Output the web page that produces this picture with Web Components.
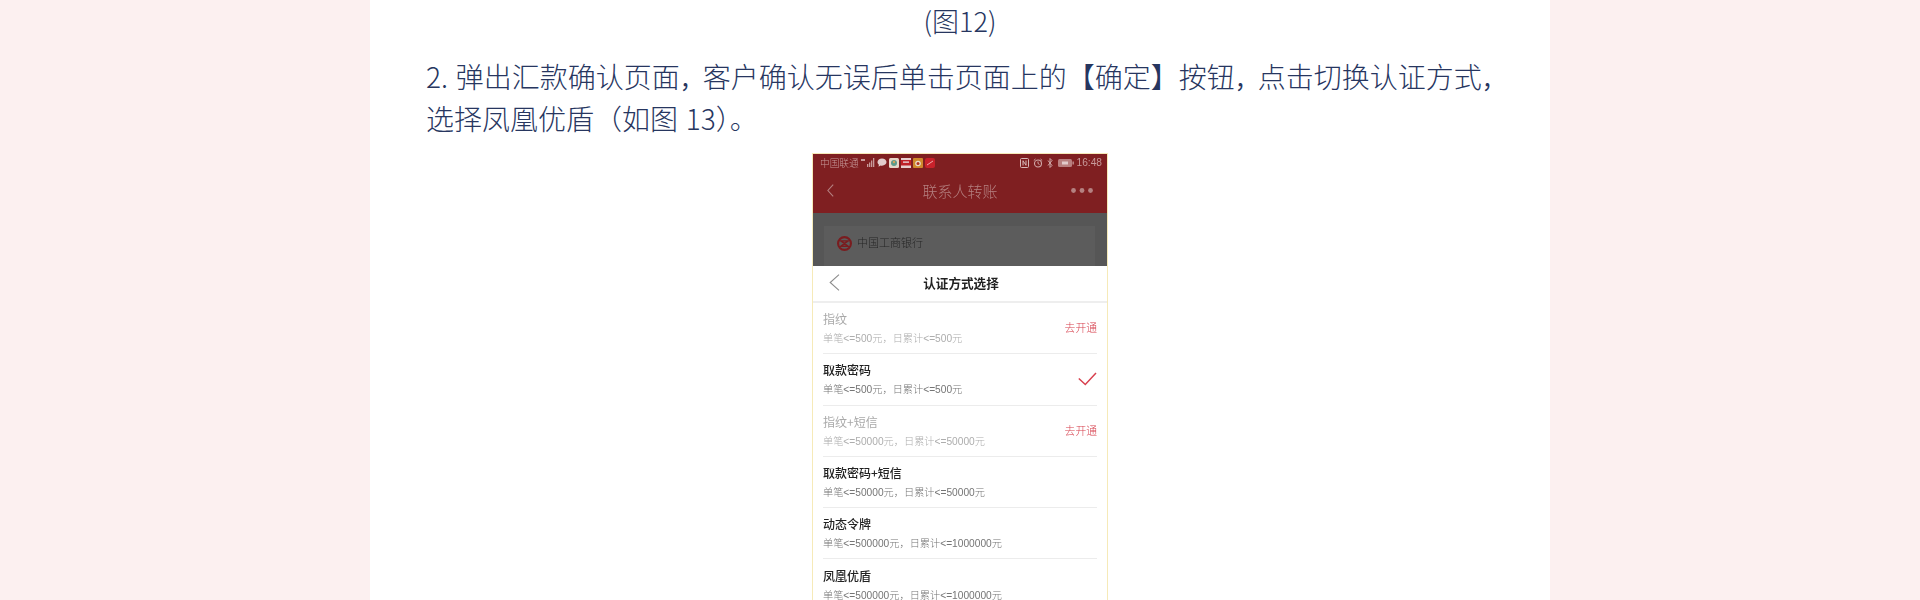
<!DOCTYPE html>
<html lang="zh-CN"><head><meta charset="utf-8"><title>图12</title>
<style>
html,body{margin:0;height:600px;overflow:hidden;background:#fcf0f0}
body{font-family:"Noto Sans CJK SC","Noto Sans",sans-serif}
</style></head><body>
<doc-page>
  <doc-caption>(图12)</doc-caption>
  <doc-para>2. 弹出汇款确认页面<doc-comma>，</doc-comma>客户确认无误后单击页面上的【确定】按钮<doc-comma>，</doc-comma>点击切换认证方式<doc-comma>，</doc-comma>选择凤凰优盾（如图 13）。</doc-para>
  <phone-shot>
    <method-row slot="rows" state="off" title-text="指纹" sub="单笔&lt;=500元，日累计&lt;=500元"></method-row>
    <method-row slot="rows" state="checked" title-text="取款密码" sub="单笔&lt;=500元，日累计&lt;=500元"></method-row>
    <method-row slot="rows" state="off" title-text="指纹+短信" sub="单笔&lt;=50000元，日累计&lt;=50000元"></method-row>
    <method-row slot="rows" title-text="取款密码+短信" sub="单笔&lt;=50000元，日累计&lt;=50000元"></method-row>
    <method-row slot="rows" title-text="动态令牌" sub="单笔&lt;=500000元，日累计&lt;=1000000元"></method-row>
    <method-row slot="rows" title-text="凤凰优盾" sub="单笔&lt;=500000元，日累计&lt;=1000000元"></method-row>
  </phone-shot>
</doc-page>
<script>
function def(name, html){
  customElements.define(name, class extends HTMLElement{
    constructor(){super();this.attachShadow({mode:'open'}).innerHTML=html;}
  });
}
def('doc-page',`<style>:host{display:block;width:1180px;height:600px;margin:0 auto;background:#fff;overflow:hidden;color:#27365f;font-weight:300}</style><slot></slot>`);
def('doc-caption',`<style>:host{display:block;text-align:center;font-size:27px;line-height:42px;height:42px}</style><slot></slot>`);
def('doc-comma',`<style>:host{display:inline;font-size:23px;font-weight:400;line-height:0}</style><slot></slot>`);
def('doc-para',`<style>:host{display:block;font-size:28px;line-height:42px;padding:13px 40px 14px 56px;word-spacing:1.5px}</style><slot></slot>`);
def('phone-shot',`<style>
:host{display:block;box-sizing:border-box;width:296px;height:460px;margin:0 auto;border:solid #f6eab8;border-width:1px 1px 0;font-family:"Liberation Sans","Noto Sans CJK SC",sans-serif;overflow:hidden;filter:blur(.55px);background:#fff}
.red{background:#7f1f21;height:59px;display:flex;flex-direction:column}
.status{height:17px;display:flex;align-items:center;padding:0 5px 0 7px;gap:2px;font-size:9.7px;color:#c79a9a}
.status svg{display:block;flex:none}
.grow{flex:1}
.nav{flex:1;display:grid;grid-template-columns:1fr auto 1fr;align-items:center;padding:0 14px 4px 14px;color:#b58181;font-size:15px}
.nav svg:last-child{justify-self:end}
.grey{background:#565656;height:53px;padding:13px 12px 0 11px;box-sizing:border-box}
.card{background:#5c5c5c;height:40px;display:flex;align-items:flex-start;gap:5px;padding:10px 13px;box-sizing:border-box;font-size:11px;line-height:15px;color:#262626}
.sheet-head{height:37px;box-sizing:border-box;border-bottom:2px solid #eee;display:grid;grid-template-columns:1fr auto 1fr;align-items:center;padding:0 14px 3px 16px;font-size:12.6px;font-weight:700;color:#222}
.rows{padding:0 10px}
</style>
<div class="red">
  <div class="status"><span>中国联通</span>
    <svg width="14" height="9" viewBox="0 0 14 9"><g fill="#c79a9a"><rect x="0" y="1" width="4" height="2"/><rect x="6" y="6" width="1.3" height="3"/><rect x="8" y="4.5" width="1.3" height="4.5"/><rect x="10" y="2.5" width="1.3" height="6.5"/><rect x="12" y="0" width="1.3" height="9"/></g></svg>
    <svg width="10" height="9" viewBox="0 0 10 9"><path d="M5 .5c2.500 0 4.500 1.600 4.500 3.600S7.500 7.700 5 7.700c-.5 0-1 0-1.400-.2L1.500 8.700l.4-2C1 6 .5 5.100.5 4.100.5 2.100 2.500.5 5 .5z" fill="#e2cccc"/></svg>
    <svg width="10" height="10" viewBox="0 0 10 10"><rect width="10" height="10" rx="1.500" fill="#e8d6c8"/><circle cx="5" cy="5" r="3" fill="#5d9a8a"/><circle cx="5" cy="4" r="1.200" fill="#d8a35a"/></svg>
    <svg width="10" height="10" viewBox="0 0 10 10"><rect width="10" height="10" fill="#e8d0d0"/><rect y="2" width="10" height="5.500" fill="#c02028"/><rect x="2" y="3.500" width="6" height="1.200" fill="#eee"/></svg>
    <svg width="10" height="10" viewBox="0 0 10 10"><rect width="10" height="10" rx="1" fill="#cf8a2c"/><circle cx="5" cy="5.500" r="2.800" fill="#e8dccb"/><circle cx="5" cy="5.500" r="1.500" fill="#b5341f"/></svg>
    <svg width="10" height="10" viewBox="0 0 10 10"><rect width="10" height="10" rx="2" fill="#c8222b"/><path d="M2 7l3-2 3-2" stroke="#eaa" stroke-width="1" fill="none"/></svg>
    <span class="grow"></span>
    <svg width="9" height="10" viewBox="0 0 9 10"><rect x=".5" y=".5" width="8" height="9" rx="1" fill="none" stroke="#d8b8b8"/><path d="M3 2.500v5M6 2.500v5M3 3l3 4" stroke="#d8b8b8" fill="none"/></svg>
    <svg width="10" height="10" viewBox="0 0 10 10" style="margin-left:2px"><circle cx="5" cy="5.500" r="3.500" fill="none" stroke="#d0a8a8" stroke-width="1.100"/><path d="M5 3.500v2l1.500 1M.8 2.500L2.500 1M9.200 2.500L7.500 1" stroke="#d0a8a8" fill="none"/></svg>
    <svg width="6" height="10" viewBox="0 0 6 10" style="margin-left:2px"><path d="M1 2.500l4 5-2 2v-9l2 2-4 5" stroke="#d0a8a8" fill="none"/></svg>
    <svg width="16" height="8" viewBox="0 0 16 8" style="margin-left:3px"><rect width="14" height="8" rx="1.500" fill="#b97f7f"/><rect x="14.500" y="2.500" width="1.300" height="3" fill="#c79a9a"/><rect x="4" y="2.500" width="6" height="3" fill="#e2caca"/></svg>
    <span style="margin-left:1px;font-size:10.2px">16:48</span>
  </div>
  <div class="nav">
    <svg width="7" height="13" viewBox="0 0 7 13"><path d="M6.200.7L.9 6.500l5.300 5.800" fill="none" stroke="#b58181" stroke-width="1.100"/></svg>
    <span>联系人转账</span>
    <svg width="22" height="5" viewBox="0 0 22 5"><g fill="#b58181"><circle cx="2.500" cy="2.500" r="2.400"/><circle cx="11" cy="2.500" r="2.400"/><circle cx="19.500" cy="2.500" r="2.400"/></g></svg>
  </div>
</div>
<div class="grey"><div class="card">
  <svg width="15" height="15" viewBox="0 0 14 14" style="flex:none"><circle cx="7" cy="7" r="6" fill="none" stroke="#7a1c1f" stroke-width="2"/><path d="M3.500 4.500h7l-7 5h7zM4 4.500l6 5M10 4.500l-6 5" fill="none" stroke="#7a1c1f" stroke-width="1.300"/></svg>
  <span>中国工商银行</span>
</div></div>
<div class="sheet-head">
  <svg width="11" height="17" viewBox="0 0 11 17"><path d="M10 .7L1.200 8.500 10 16.300" fill="none" stroke="#8c8c8c" stroke-width="1.100"/></svg>
  <span>认证方式选择</span>
  <span></span>
</div>
<div class="rows"><slot name="rows"></slot></div>`);
customElements.define('method-row', class extends HTMLElement{
  constructor(){super();this.attachShadow({mode:'open'});}
  connectedCallback(){
    const st=this.getAttribute('state');
    const right= st==='off' ? '<span class="go">去开通</span>'
      : st==='checked' ? '<svg width="19" height="14" viewBox="0 0 19 14"><path d="M.8 6.500l6.500 6L18 1" fill="none" stroke="#d8404e" stroke-width="1.500"/></svg>' : '';
    const esc=s=>s.replace(/&/g,'&amp;').replace(/</g,'&lt;');
    this.shadowRoot.innerHTML=`<style>
:host{display:flex;box-sizing:border-box;height:51.3px;align-items:center;justify-content:space-between;border-bottom:1px solid #ececec}
.t{font-family:"Noto Sans CJK SC",sans-serif;font-weight:${st==='off'?400:500};font-size:12px;line-height:16px;color:${st==='off'?'#a9a9a9':'#222'}}
.s{font-size:10.2px;line-height:13px;margin-top:5px;color:${st==='off'?'#adadad':'#757575'};white-space:nowrap}
.go{font-size:10.8px;color:#d63f4c;font-family:"Noto Sans CJK SC",sans-serif;margin-bottom:2px}
svg{display:block}
</style><div><div class="t">${esc(this.getAttribute('title-text'))}</div><div class="s">${esc(this.getAttribute('sub'))}</div></div>${right}`;
  }
});
</script>
</body></html>
